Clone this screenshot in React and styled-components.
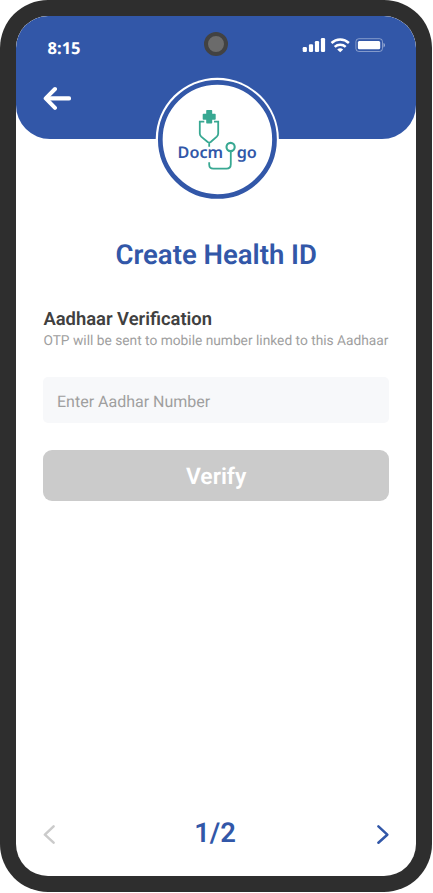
import React from "react";
import styled, { createGlobalStyle } from "styled-components";

const BLUE = "#3257a8";
const TEAL = "#38a892";

const GlobalStyle = createGlobalStyle`
  *, *::before, *::after { box-sizing: border-box; }
  body {
    margin: 0;
    background: #fff;
    font-family: Roboto, "Liberation Sans", sans-serif;
    text-rendering: geometricPrecision;
  }
  button, input { text-rendering: inherit; }
`;

const Phone = styled.div`
  width: 432px;
  height: 892px;
  padding: 16px;
  border-radius: 48px;
  background: #2e2e2e;
`;

const Screen = styled.main`
  position: relative;
  display: flex;
  flex-direction: column;
  height: 860px;
  border-radius: 32px;
  background: #fff;
  overflow: hidden;
`;

const Header = styled.header`
  flex: none;
  height: 123.4px;
  padding: 20px 30px 0 27px;
  border-radius: 32px 32px 34px 34px;
  background: ${BLUE};
`;

const StatusBar = styled.div`
  display: flex;
  align-items: center;
  justify-content: space-between;
  height: 24px;
  padding-left: 4.6px;
`;

const Time = styled.span`
  color: #fff;
  font: 700 16.5px/24px "Noto Sans", "Open Sans", sans-serif;
`;

const StatusIcons = styled.svg`
  display: block;
  width: 84px;
  height: 18px;
  margin-bottom: 6px;
`;

const Camera = styled.div`
  position: absolute;
  top: 16px;
  left: 188px;
  width: 24px;
  height: 24px;
  border: 4px solid #424242;
  border-radius: 50%;
  background: #6b6b6b;
`;

const IconButton = styled.button`
  display: flex;
  margin: 0;
  padding: 0;
  border: 0;
  background: none;
  color: ${(p) => p.$color};
`;

const BackRow = styled.div`
  display: flex;
  padding-top: 26px;
`;

const Badge = styled.div`
  position: absolute;
  top: 61px;
  left: 139px;
  display: flex;
  width: 124px;
  height: 124px;
  border-radius: 50%;
`;

const Logo = styled.svg`
  display: block;
  width: 124px;
  height: 124px;
`;

const LogoText = styled.text`
  fill: ${BLUE};
  font: 600 16px "Noto Sans", "Open Sans", sans-serif;
`;

const Content = styled.section`
  display: flex;
  flex: 1;
  flex-direction: column;
  padding: 99px 27px 0 27.4px;
`;

const Title = styled.h1`
  margin: 0;
  color: ${BLUE};
  font-size: 27.5px;
  font-weight: 600;
  line-height: 34px;
  text-align: center;
  white-space: nowrap;
`;

const Heading = styled.h2`
  margin: 35.5px 0 0;
  color: #404040;
  font-size: 18.4px;
  font-weight: 600;
  line-height: 24px;
`;

const Hint = styled.p`
  margin: 0;
  color: #a0a0a0;
  font-size: 13.75px;
  line-height: 19px;
  white-space: nowrap;
`;

const Field = styled.input`
  width: 100%;
  height: 46px;
  margin: 26.5px 0 0;
  padding: 3px 13.6px 0;
  border: 0;
  border-radius: 5px;
  background: #f7f8fa;
  font: 400 16px Roboto, sans-serif;
  &::placeholder { color: #9f9f9f; opacity: 1; }
`;

const Submit = styled.button`
  width: 100%;
  height: 50.5px;
  margin: 27.1px 0 0;
  padding: 2px 0 0;
  border: 0;
  border-radius: 9px;
  background: #cbcbcb;
  color: #fff;
  font: 600 22.9px Roboto, sans-serif;
`;

const Pager = styled.nav`
  display: flex;
  align-items: center;
  justify-content: space-between;
  height: 40px;
  margin: 0 27px 22px;
`;

const PageCount = styled.span`
  margin: 0 2px 1px 0;
  color: ${BLUE};
  font-size: 27.4px;
  font-weight: 600;
  line-height: 39px;
`;

const Chevron = ({ d }) => (
  <svg width="12" height="20" viewBox="0 0 12 20" fill="none" stroke="currentColor" strokeWidth="2.5" strokeLinecap="round" strokeLinejoin="round">
    <path d={d} />
  </svg>
);

const Status = () => (
  <StatusIcons viewBox="302 36 84 18" fill="#fff">
    <rect x="302.7" y="47" width="4.2" height="5" rx="1.2" />
    <rect x="308.9" y="44.2" width="4.2" height="7.8" rx="1.2" />
    <rect x="314.9" y="41.1" width="4.2" height="10.9" rx="1.2" />
    <rect x="320.9" y="38.1" width="4.2" height="13.9" rx="1.2" />
    <g fill="none" stroke="#fff" strokeWidth="2.5">
      <path d="M331.5 43a12.7 12.7 0 0 1 17.4 0" />
      <path d="M334.7 46.9a8.2 8.2 0 0 1 11 0" />
    </g>
    <path d="M337.2 49.4a4.7 4.7 0 0 1 6 0L340.2 52.2Z" />
    <rect x="355.9" y="38.7" width="26.6" height="12.8" rx="3" fill="none" stroke="#fff" strokeOpacity=".4" />
    <rect x="357.9" y="40.9" width="22.3" height="8.4" rx="1.5" />
    <path d="M383.5 43v4.4c.9-.4 1.5-1.2 1.5-2.2s-.6-1.8-1.5-2.2Z" fillOpacity=".5" />
  </StatusIcons>
);

const DocmigoLogo = () => (
  <Logo viewBox="155 77 124 124" role="img" aria-label="Docmigo">
    <circle cx="217.3" cy="139.4" r="61.6" fill="#fff" />
    <circle cx="217.4" cy="139.4" r="57.1" fill="none" stroke={BLUE} strokeWidth="4.7" />
    <path fill={TEAL} d="M206.9 110h4.6q.7 0 .7.7v3.1h2.7q.8 0 .8.8v4.4q0 .8-.8.8h-2.7v2.9q0 .7-.7.7h-4.6q-.7 0-.7-.7v-2.9h-2.7q-.8 0-.8-.8v-4.4q0-.8.8-.8h2.7v-3.1q0-.7.7-.7Z" />
    <g fill="none" stroke={TEAL} strokeWidth="1.8">
      <path d="M204.3 121.6h-4.5v12q0 1.7 1.4 3l6.5 5.4q1.5 1.1 3 0l6.1-5.4q1.4-1.3 1.4-3v-12H214M209.2 142.2v4.6M209.2 162.3v2.2q0 4.1 4.1 4.1h13.2q4.3 0 4.3-4.3v-12.8" />
      <circle cx="230.6" cy="147" r="4.1" strokeWidth="2.1" />
    </g>
    <LogoText x="177.6" y="158" textLength="45.5" lengthAdjust="spacingAndGlyphs">Docm</LogoText>
    <LogoText x="236.7" y="158" textLength="20.2" lengthAdjust="spacingAndGlyphs">go</LogoText>
  </Logo>
);

export default function App() {
  return (
    <>
      <GlobalStyle />
      <Phone>
        <Screen>
          <Header>
            <StatusBar>
              <Time>8:15</Time>
              <Status />
            </StatusBar>
            <BackRow>
              <IconButton $color="#fff" aria-label="Back">
                <svg width="28" height="24" viewBox="0 0 28 24" fill="none" stroke="currentColor" strokeLinecap="round">
                  <path d="M12 3 2.7 12.4 12 21.8" strokeWidth="4" strokeLinejoin="round" />
                  <path d="M4 12.4h21.9" strokeWidth="4.4" />
                </svg>
              </IconButton>
            </BackRow>
          </Header>
          <Camera />
          <Badge>
            <DocmigoLogo />
          </Badge>
          <Content>
            <Title>Create Health ID</Title>
            <Heading>Aadhaar Verification</Heading>
            <Hint>OTP will be sent to mobile number linked to this Aadhaar</Hint>
            <Field placeholder="Enter Aadhar Number" />
            <Submit type="button">Verify</Submit>
          </Content>
          <Pager>
            <IconButton $color="#cbcbcb" aria-label="Previous">
              <Chevron d="M10.6 2.3 1.9 10.7 10.6 18.7" />
            </IconButton>
            <PageCount>1/2</PageCount>
            <IconButton $color={BLUE} aria-label="Next">
              <Chevron d="M1.4 2.3 10.3 10.7 1.4 18.7" />
            </IconButton>
          </Pager>
        </Screen>
      </Phone>
    </>
  );
}
